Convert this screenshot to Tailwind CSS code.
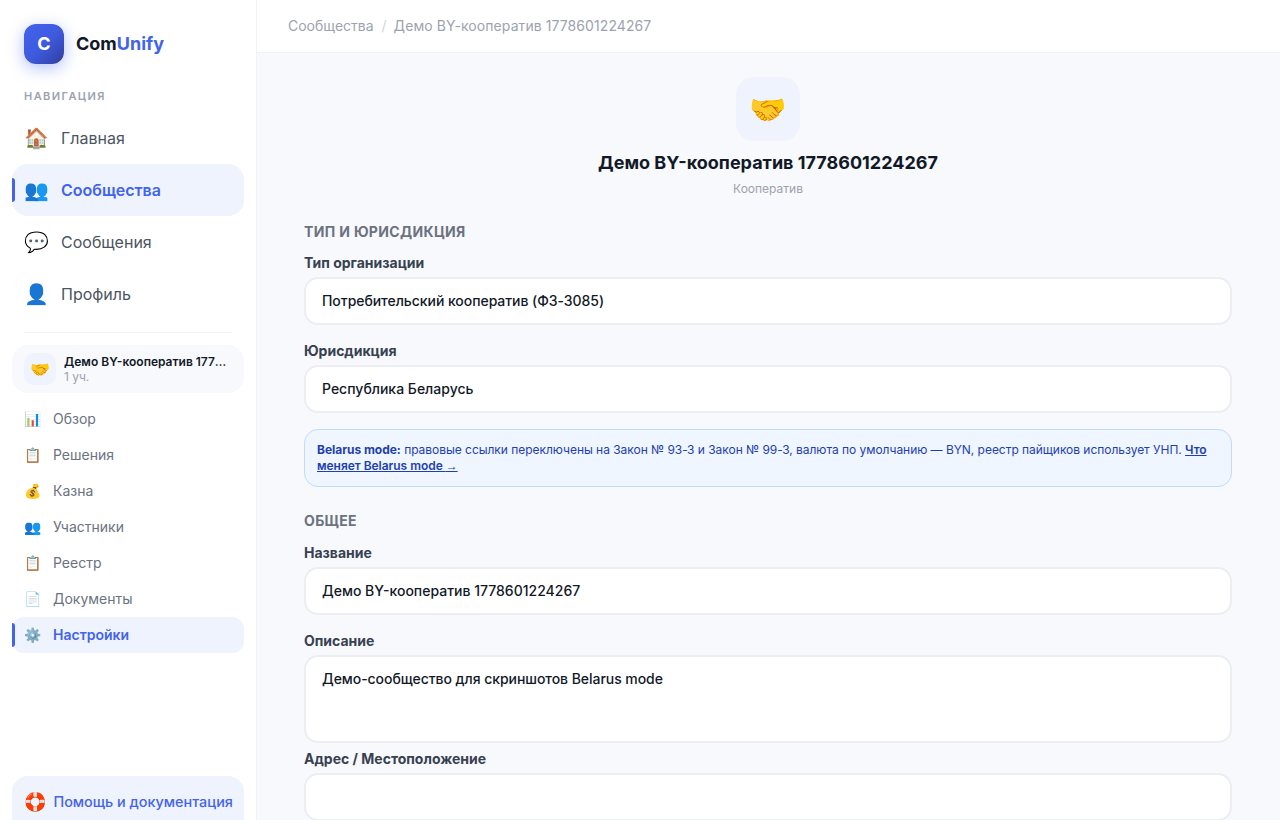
<!DOCTYPE html>
<html lang="ru">
<head>
  <meta charset="UTF-8">
  <title>ComUnify</title>
  <script src="https://cdn.jsdelivr.net/npm/@tailwindcss/browser@4"></script>
</head>
<body class="h-[820px] overflow-hidden flex bg-[#f8f9fc] font-['Inter','Noto_Color_Emoji',sans-serif]">

  <aside class="relative z-10 w-[256px] h-[820px] shrink-0 bg-white shadow-[1px_0_0_#f1f2f5] flex flex-col">
    <div class="flex items-center gap-3 pl-6 pt-6 h-16 shrink-0">
      <div class="w-10 h-10 rounded-xl bg-gradient-to-br from-[#4263eb] via-[#3f5be0] to-[#2f3f9e] shadow-[0_4px_16px_rgba(66,99,235,0.4)] flex items-center justify-center text-white font-bold text-lg">C</div>
      <div class="text-lg font-bold text-[#111827]">Com<span class="text-[#4263eb]">Unify</span></div>
    </div>
    <div class="pl-6 mt-6 h-4 leading-4 text-[11px] font-semibold tracking-[1.43px] text-[#9ca3af]">НАВИГАЦИЯ</div>

    <nav class="mt-2 px-3 flex flex-col">
      <a class="h-[52px] flex items-center gap-3 px-3 rounded-2xl text-base text-[#4b5563]"><span class="w-[25px] text-center text-xl">🏠</span>Главная</a>
      <a class="relative h-[52px] flex items-center gap-3 px-3 rounded-2xl bg-[#eff3fe] text-base font-semibold text-[#4263eb]"><span class="absolute left-0 top-[14px] w-[3px] h-6 rounded-r bg-[#4263eb]"></span><span class="w-[25px] text-center text-xl">👥</span>Сообщества</a>
      <a class="h-[52px] flex items-center gap-3 px-3 rounded-2xl text-base text-[#4b5563]"><span class="w-[25px] text-center text-xl">💬</span>Сообщения</a>
      <a class="h-[52px] flex items-center gap-3 px-3 rounded-2xl text-base text-[#4b5563]"><span class="w-[25px] text-center text-xl">👤</span>Профиль</a>
    </nav>

    <div class="mx-6 mt-3 border-t border-[#f1f2f5]"></div>

    <div class="mx-3 mt-3 h-12 rounded-2xl bg-[#f8f9fc] flex items-center gap-2 px-3">
      <div class="w-8 h-8 shrink-0 rounded-[10px] bg-[#eff3fe] flex items-center justify-center text-base">🤝</div>
      <div class="min-w-0">
        <div class="truncate text-xs leading-4 font-semibold text-[#111827]">Демо BY-кооператив 1778601224267</div>
        <div class="text-xs leading-[14px] text-[#9ca3af]">1 уч.</div>
      </div>
    </div>

    <nav class="mt-2 px-3 flex flex-col">
      <a class="h-9 flex items-center gap-3 px-3 rounded-xl text-sm text-[#6b7280]"><span class="w-[17px] text-center text-sm">📊</span>Обзор</a>
      <a class="h-9 flex items-center gap-3 px-3 rounded-xl text-sm text-[#6b7280]"><span class="w-[17px] text-center text-sm">📋</span>Решения</a>
      <a class="h-9 flex items-center gap-3 px-3 rounded-xl text-sm text-[#6b7280]"><span class="w-[17px] text-center text-sm">💰</span>Казна</a>
      <a class="h-9 flex items-center gap-3 px-3 rounded-xl text-sm text-[#6b7280]"><span class="w-[17px] text-center text-sm">👥</span>Участники</a>
      <a class="h-9 flex items-center gap-3 px-3 rounded-xl text-sm text-[#6b7280]"><span class="w-[17px] text-center text-sm">📋</span>Реестр</a>
      <a class="h-9 flex items-center gap-3 px-3 rounded-xl text-sm text-[#6b7280]"><span class="w-[17px] text-center text-sm">📄</span>Документы</a>
      <a class="relative h-9 flex items-center gap-3 px-3 rounded-xl bg-[#eff3fe] text-sm font-semibold text-[#4263eb]"><span class="absolute left-0 top-[6px] w-[3px] h-6 rounded-r bg-[#4263eb]"></span><span class="w-[17px] text-center text-sm">⚙️</span>Настройки</a>
    </nav>

    <div class="mt-auto mx-3 h-[44px] rounded-t-2xl bg-[#eff3fe] flex items-start gap-[7px] pl-3 pt-[15px]">
      <span class="text-lg leading-[22px]">🛟</span><span class="text-[14.4px] leading-[22px] font-medium text-[#4263eb] whitespace-nowrap">Помощь и документация</span>
    </div>
  </aside>

  <div class="flex-1 min-w-0 h-[820px] overflow-hidden">
    <header class="h-[53px] bg-white border-b border-[#f1f2f5] flex items-center gap-2 px-8 text-sm text-[#9ca3af]">
      <span>Сообщества</span><span class="text-[#d1d5db]">/</span><span class="-ml-px tracking-[0.08px]">Демо BY-кооператив 1778601224267</span>
    </header>

    <main class="px-12 pt-6">
      <div class="flex flex-col items-center">
        <div class="w-16 h-16 rounded-[18px] bg-[#eff3fe] flex items-center justify-center text-[30px]">🤝</div>
        <h1 class="mt-2 text-lg leading-7 font-bold text-[#111827]">Демо BY-кооператив 1778601224267</h1>
        <p class="mt-1 text-xs leading-4 text-[#9ca3af]">Кооператив</p>
      </div>

      <h2 class="mt-[25px] text-sm leading-5 font-bold tracking-[0.35px] text-[#6b7280]">ТИП И ЮРИСДИКЦИЯ</h2>
      <label class="block mt-[11px] text-sm leading-5 font-bold text-[#374151]">Тип организации</label>
      <input class="block mt-1 w-full h-12 px-4 pb-[2px] rounded-[14px] border-2 border-[#eceef2] bg-white text-sm font-medium tracking-[-0.05px] text-[#111827]" value="Потребительский кооператив (ФЗ-3085)">
      <label class="block mt-4 text-sm leading-5 font-bold text-[#374151]">Юрисдикция</label>
      <input class="block mt-1 w-full h-12 px-4 pb-[2px] rounded-[14px] border-2 border-[#eceef2] bg-white text-sm font-medium text-[#111827]" value="Республика Беларусь">

      <div class="mt-4 h-[58px] rounded-[14px] border border-[#bfdbfe] bg-[#eff6ff] px-3 py-3 text-xs leading-4 tracking-[-0.035px] text-[#1e40af]">
        <b class="font-bold">Belarus mode:</b> правовые ссылки переключены на Закон № 93-З и Закон № 99-З, валюта по умолчанию — BYN, реестр пайщиков использует УНП. <a class="font-semibold underline">Что меняет Belarus mode <span class="font-['Roboto'] font-black">→</span></a>
      </div>

      <h2 class="mt-6 text-sm leading-5 font-bold tracking-[0.35px] text-[#6b7280]">ОБЩЕЕ</h2>
      <label class="block mt-3 text-sm leading-5 font-bold text-[#374151]">Название</label>
      <input class="block mt-1 w-full h-12 px-4 pb-[2px] rounded-[14px] border-2 border-[#eceef2] bg-white text-sm font-medium text-[#111827]" value="Демо BY-кооператив 1778601224267">
      <label class="block mt-4 text-sm leading-5 font-bold text-[#374151]">Описание</label>
      <textarea class="block mt-1 w-full h-[88px] px-4 py-3 rounded-[14px] border-2 border-[#eceef2] bg-white text-sm leading-5 font-medium tracking-[-0.05px] text-[#111827] resize-none">Демо-сообщество для скриншотов Belarus mode</textarea>
      <label class="block mt-[6px] text-sm leading-5 font-bold text-[#374151]">Адрес / Местоположение</label>
      <input class="block mt-1 w-full h-12 px-4 rounded-[14px] border-2 border-[#eceef2] bg-white text-sm font-medium text-[#111827]" value="">
    </main>
  </div>
</body>
</html>
